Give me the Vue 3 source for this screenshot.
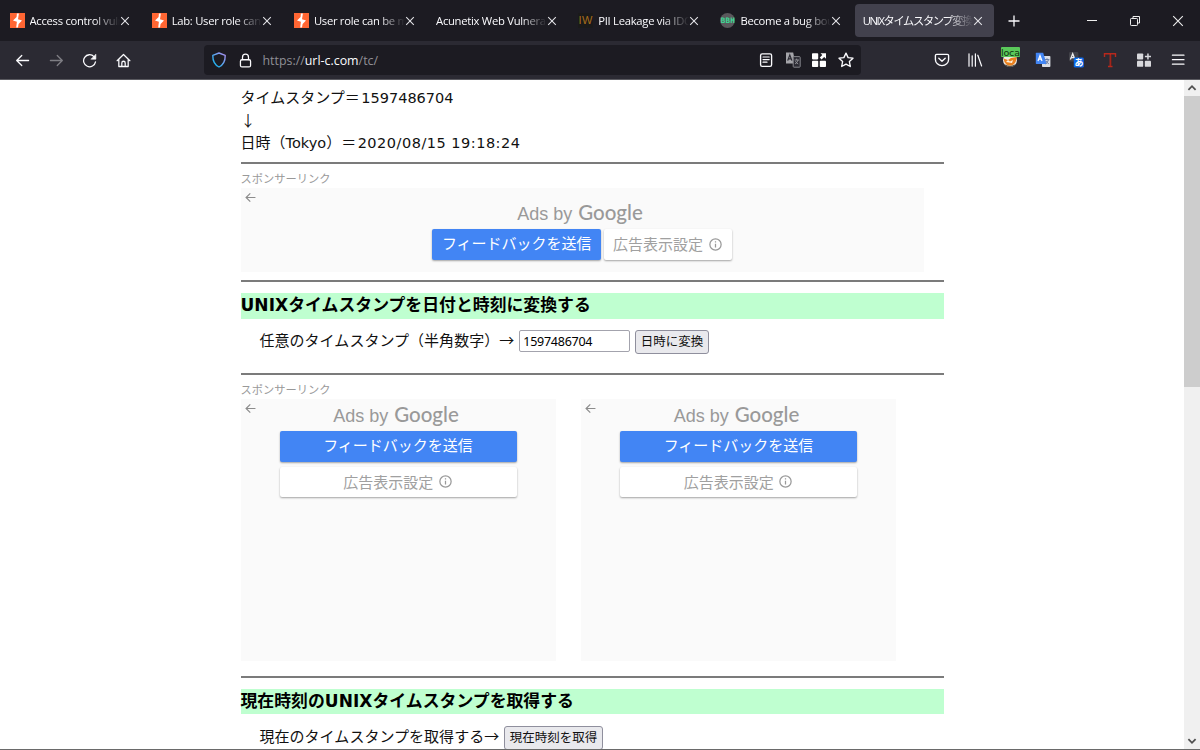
<script setup>
const tabs = [
  { title: 'Access control vulnerabilities', icon: 'burp' },
  { title: 'Lab: User role can be modified', icon: 'burp' },
  { title: 'User role can be modified in', icon: 'burp' },
  { title: 'Acunetix Web Vulnerability', icon: '' },
  { title: 'PII Leakage via IDOR', icon: 'iw' },
  { title: 'Become a bug bounty', icon: 'bbh' },
  { title: 'UNIXタイムスタンプ変換ツール', icon: '', active: true, jp: true }
]
</script>

<template>
  <div class="window">
    <header class="tabbar">
      <div v-for="(t, i) in tabs" :key="i" class="tab" :class="{ active: t.active }">
        <svg v-if="t.icon === 'burp'" class="fav" viewBox="0 0 15 15">
          <rect width="15" height="15" fill="#ff6633" />
          <path d="M8.9.6 6.9.6 6.6 4 3 7.6 6.9 8.7 6.2 14.4 8 14.4 8.6 11 12 7.4 8 6.2z" fill="#fff" />
        </svg>
        <span v-else-if="t.icon === 'iw'" class="fav iw">IW</span>
        <span v-else-if="t.icon === 'bbh'" class="fav bbh"><b>BBH</b></span>
        <span class="title" :class="{ jp: t.jp }">{{ t.title }}</span>
        <svg class="close" viewBox="0 0 10 10"><path d="M1.2 1.2 8.8 8.8M8.8 1.2 1.2 8.8" stroke="#e4e4e8" stroke-width="1.05" /></svg>
      </div>
      <svg class="plus" viewBox="0 0 12 12"><path d="M6 .5v11M.5 6h11" stroke="#fbfbfe" stroke-width="1.3" /></svg>
      <div class="winbtns">
        <svg viewBox="0 0 12 12"><path d="M1 5.5h10" stroke="#eee" stroke-width="1" /></svg>
        <svg viewBox="0 0 12 12" fill="none" stroke="#eee"><rect x="1.5" y="3.5" width="7" height="7" rx=".8" /><path d="M4 3.2V1.5h6.5V8H9" /></svg>
        <svg viewBox="0 0 12 12"><path d="M1.2 1.2 10.8 10.8M10.8 1.2 1.2 10.8" stroke="#eee" stroke-width="1.1" /></svg>
      </div>
    </header>

    <nav class="toolbar">
      <div class="navbtns">
        <svg viewBox="0 0 16 16" class="ic"><path d="M14.5 8H2M7.2 2.7 1.8 8l5.4 5.3" /></svg>
        <svg viewBox="0 0 16 16" class="ic dim"><path d="M1.5 8H14M8.8 2.7 14.2 8l-5.4 5.3" /></svg>
        <svg viewBox="0 0 16 16" class="ic"><path d="M14.4 9.4A6.4 6.4 0 1 1 12.8 3.9" /><path d="M14.8 1.6v5H9.8z" fill="#fbfbfe" stroke-width=".6" /></svg>
        <svg viewBox="0 0 16 16" class="ic"><path d="M1.2 8.2 8 1.6l6.8 6.6M3 7v7.4h10V7M6.2 14V10.6a1.8 1.8 0 0 1 3.6 0V14" /></svg>
      </div>
      <div class="urlbar">
        <svg viewBox="0 0 16 16" class="shield">
          <defs><linearGradient id="sg" x1="0" y1="1" x2="1" y2="0"><stop offset="0" stop-color="#00b8f0" /><stop offset=".5" stop-color="#5aa5ee" /><stop offset="1" stop-color="#b18cf0" /></linearGradient></defs>
          <path d="M8 1 14.2 3.4C14.3 8.8 12 12.9 8 15 4 12.9 1.7 8.8 1.8 3.4z" fill="none" stroke="url(#sg)" stroke-width="1.4" stroke-linejoin="round" />
        </svg>
        <svg viewBox="0 0 16 16" class="ic lock"><rect x="2.6" y="7.2" width="10.8" height="7.6" rx="1.6" /><path d="M4.8 7V4.4a3.2 3.2 0 0 1 6.4 0V7" /></svg>
        <span class="url">https://<b>url-c.com</b>/tc/</span>
        <div class="urlicons">
          <svg viewBox="0 0 16 16" class="ic"><rect x="2.6" y="1.8" width="11" height="12.6" rx="1.6" /><path d="M5 5h6.2M5 7.6h6.2M5 10.2h4" stroke-width="1.2" /></svg>
          <svg viewBox="0 0 16 16"><path d="M1 .5h7.2l2.2 11H1z" fill="#a5a5aa" /><rect x="8.2" y="4.6" width="7" height="10.6" rx=".8" fill="#2b2a33" stroke="#85858b" /><path d="M9.6 8h4.4M11.7 6.6V8M13 8q-.7 3-3 4M10.4 9.2q1 2 2.8 2.8" stroke="#a0a0a5" fill="none" stroke-width=".8" /><path d="M2.7 8.6 4.8 3l2.1 5.6M3.4 6.8h2.8" stroke="#2b2a33" fill="none" stroke-width="1.2" /></svg>
          <svg viewBox="0 0 16 16" fill="#fff"><rect x="1" y="1.2" width="6.2" height="6.2" rx=".8" /><rect x="1" y="8.8" width="6.2" height="6.2" rx=".8" /><rect x="8.8" y="8.8" width="6.2" height="6.2" rx=".8" /><path d="M9.5 1.2H15v5.5l-1.8-1.8-2.7 2.5-1.7-1.8 2.5-2.6z" /></svg>
          <svg viewBox="0 0 16 16" class="ic"><path d="m8 1.1 2.1 4.5 4.9.6-3.6 3.4.9 4.9L8 12.1l-4.3 2.4.9-4.9L1 6.2l4.9-.6z" /></svg>
        </div>
      </div>
      <div class="exts">
        <svg viewBox="0 0 16 16" class="ic"><path d="M2.6 2.3h10.8q1.2 0 1.2 1.2v3.9a6.6 6.2 0 0 1-13.2 0V3.5q0-1.2 1.2-1.2zM4.8 6.2 8 9.2l3.2-3" /></svg>
        <svg viewBox="0 0 16 16" class="ic"><path d="M2 1.8v12.4M5.2 3.8v10.4M8.4 1.8v12.4M10.8 3.2 14.6 14" stroke-width="1.2" /></svg>
        <div class="fox">
          <svg viewBox="0 0 16 16"><circle cx="8" cy="8" r="7" fill="#f1ece4" /><path d="M1.6 6.5 6 8l3-2 5.5-1q.3 5-3 7.4Q8 15 4.4 12.4 1.8 10 1.6 6.5z" fill="#e9801f" /><path d="m4 10 2-2 2 1.4L11 8l-1 3z" fill="#fff2df" /><path d="M3 13q5 3.2 10 0" stroke="#575047" fill="none" stroke-width="1.2" /></svg>
          <span>loca</span>
        </div>
        <svg viewBox="0 0 16 16"><rect x="7" y="4" width="8.4" height="11" rx=".8" fill="#dcdfe6" /><path d="M1.4.8h6.8L11.6 12H1.4Q.8 12 .8 11.3V1.5Q.8.8 1.4.8z" fill="#4285f4" /><path d="M9.8 7.6h4.6M12 6.3v1.3M13.4 8q-.7 2.6-2.8 4M11 9q1 2 2.8 2.8" fill="none" stroke="#5b7199" stroke-width=".9" /><path d="M3 9 5 3.6 7 9M3.7 7.2h2.6" stroke="#fff" fill="none" stroke-width="1.2" /></svg>
        <svg viewBox="0 0 16 16"><rect x="1" y="0" width="9.4" height="9.4" rx="1.4" fill="#424249" /><path d="M2.4 7.4 4.7 1.8 7 7.4M3.2 5.6h3" stroke="#eee" fill="none" stroke-width="1.3" /><rect x="5.8" y="5.6" width="10" height="10" rx="1.4" fill="#0a66e8" /><text x="6.4" y="13.9" class="mini">あ</text></svg>
        <svg viewBox="0 0 16 16"><path d="M2.5 5V1.8h11V5M8.3 1.8v12.4M6 14.5h4.5" stroke="#b8281c" stroke-width="1.4" fill="none" /><path d="M9.2 3v11" stroke="#701f19" stroke-width=".9" /></svg>
        <svg viewBox="0 0 16 16" fill="#d8d8dc"><rect x="1" y="1.4" width="6.2" height="6" rx=".9" /><rect x="1" y="8.8" width="6.2" height="6" rx=".9" /><rect x="8.8" y="8.8" width="6.2" height="6" rx=".9" /><path d="M11.2 1.4h1.5v2.3H15v1.5h-2.3v2.3h-1.5V5.2H8.9V3.7h2.3z" /></svg>
        <svg viewBox="0 0 16 16" class="ic"><path d="M2.4 3.2h11.6M2.4 7.7h11.6M2.4 12.2h11.6" stroke-width="1.2" /></svg>
      </div>
    </nav>

    <div class="viewport">
      <main>
        <div class="result">
          <p>タイムスタンプ＝<span class="lat num">1597486704</span></p>
          <p>↓</p>
          <p>日時（<span class="lat">Tokyo</span>）＝<span class="lat num date">2020/08/15 19:18:24</span></p>
        </div>
        <hr />
        <p class="sponsor">スポンサーリンク</p>
        <section class="ad wide">
          <svg class="back" viewBox="0 0 10 10"><path d="M9.5 5H1M4.8 1.2 1 5l3.8 3.8" /></svg>
          <div class="brand"><span>Ads by</span><b>Google</b></div>
          <div class="btns">
            <div class="send">フィードバックを送信</div>
            <div class="why">広告表示設定<svg viewBox="0 0 12 12"><circle cx="6" cy="6" r="5.2" /><path d="M6 5.2v3.6M6 3v1.2" /></svg></div>
          </div>
        </section>
        <hr class="h2" />
        <h2><span class="lat">UNIX</span>タイムスタンプを日付と時刻に変換する</h2>
        <div class="row">
          <span>任意のタイムスタンプ（半角数字）→</span>
          <input type="text" value="1597486704" />
          <button>日時に変換</button>
        </div>
        <hr />
        <p class="sponsor">スポンサーリンク</p>
        <div class="pair">
          <section v-for="n in 2" :key="n" class="ad box">
            <svg class="back" viewBox="0 0 10 10"><path d="M9.5 5H1M4.8 1.2 1 5l3.8 3.8" /></svg>
            <div class="brand"><span>Ads by</span><b>Google</b></div>
            <div class="btns">
              <div class="send">フィードバックを送信</div>
              <div class="why">広告表示設定<svg viewBox="0 0 12 12"><circle cx="6" cy="6" r="5.2" /><path d="M6 5.2v3.6M6 3v1.2" /></svg></div>
            </div>
          </section>
        </div>
        <hr class="h4" />
        <h2>現在時刻の<span class="lat">UNIX</span>タイムスタンプを取得する</h2>
        <div class="row">
          <span>現在のタイムスタンプを取得する→</span>
          <button>現在時刻を取得</button>
        </div>
      </main>
      <aside class="scroll">
        <svg viewBox="0 0 16 16"><path d="M4.4 9.8 8 6.2l3.6 3.6" /></svg>
        <div class="thumb"></div>
        <svg class="down" viewBox="0 0 16 16"><path d="M4.4 6.2 8 9.8l3.6-3.6" /></svg>
      </aside>
    </div>
  </div>
</template>

<style>
html, body { margin: 0; overflow: hidden; }
</style>

<style scoped>
* { box-sizing: border-box; }
.window { width: 1200px; height: 750px; overflow: hidden; display: flex; flex-direction: column; background: #fff; border-bottom: 1px solid #6a6a6a; font-family: "Noto Sans CJK JP", sans-serif; }
p, h2 { margin: 0; white-space: nowrap; }
svg { display: block; flex: none; }

.tabbar { height: 41px; flex: none; background: #1c1b22; display: flex; align-items: center; padding-left: 2px; }
.tab { width: 139.2px; margin-right: 3px; height: 33px; flex: none; display: flex; align-items: center; padding: 0 11px 0 7.5px; border-radius: 4px; color: #fbfbfe; }
.tab.active { background: #42414d; }
.fav { width: 15px; height: 15px; margin-right: 5px; flex: none; }
.iw { font: 11px/15px "Liberation Sans", sans-serif; color: #a86d1a; background: #1a1a1a; text-align: center; letter-spacing: .6px; }
.bbh { border-radius: 50%; background: #5a585c; color: #3ddc97; display: flex; justify-content: center; align-items: center; }
.bbh b { font: bold 7.5px/8px "DejaVu Sans Mono", monospace; letter-spacing: .3px; }
.title { flex: 1; min-width: 0; overflow: hidden; white-space: nowrap; font: 11.25px/18px "Open Sans", "Noto Sans", sans-serif; letter-spacing: -.28px; -webkit-mask-image: linear-gradient(to left, transparent 0, #000 26px); mask-image: linear-gradient(to left, transparent 0, #000 26px); }
.title.jp { font-family: "Open Sans", "Noto Sans CJK JP", sans-serif; letter-spacing: -1.35px; }
.close { width: 10px; height: 10px; }
.plus { width: 12px; height: 12px; margin-left: 11px; }
.winbtns { margin-left: auto; display: flex; gap: 31px; padding-right: 16px; }
.winbtns svg { width: 12px; height: 12px; }

.toolbar { height: 39px; flex: none; background: #2b2a33; border-bottom: 1px solid #5a5a60; display: flex; align-items: center; }
.ic { fill: none; stroke: #fbfbfe; stroke-width: 1.35; stroke-linecap: round; stroke-linejoin: round; }
.dim { opacity: .4; }
.navbtns { display: flex; gap: 18.6px; padding-left: 15px; width: 204px; flex: none; }
.navbtns svg { width: 15px; height: 15px; }
.urlbar { width: 657px; height: 30px; flex: none; background: #1c1b22; border-radius: 4px; display: flex; align-items: center; padding: 0 7.5px 0 7px; }
.shield { width: 16px; height: 16px; }
.lock { width: 15px; height: 15px; margin-left: 11px; }
.url { margin-left: 9.5px; padding-top: 2px; font: 12.4px/20px "Open Sans", sans-serif; color: #8f8f96; }
.url b { font-weight: 400; color: #fbfbfe; }
.urlicons { margin-left: auto; display: flex; gap: 10.4px; }
.urlicons svg { width: 16px; height: 16px; }
.exts { margin-left: auto; padding-right: 14.5px; display: flex; align-items: center; gap: 17.7px; }
.exts > svg, .fox, .fox svg { width: 16px; height: 16px; }
.fox { position: relative; }
.fox span { position: absolute; left: 0; top: -5px; width: 19px; height: 10px; background: #5ac85a; color: #10300f; font: 9.5px/11px "DejaVu Sans", sans-serif; letter-spacing: -.2px; overflow: hidden; border-radius: 1px; white-space: nowrap; }
.fox svg { margin-left: 1px; }
.mini { font: bold 9px "Noto Sans CJK JP", sans-serif; fill: #fff; }

.viewport { flex: 1; min-height: 0; display: flex; justify-content: space-between; }
main { margin-left: 240.5px; width: 703px; color: #111; font-size: 15px; line-height: 22.5px; }
.result { padding-top: 6px; height: 82px; }
.lat { font-family: "DejaVu Sans", sans-serif; font-size: 14.5px; line-height: 1; }
.num { margin-left: 1.5px; }
.date { letter-spacing: .5px; }
hr { margin: 0; border: 0; height: 2px; background: #7b7b7b; }
.sponsor { font-size: 11.25px; line-height: 17px; color: #999; height: 24px; padding-top: 6px; }
.ad { background: #fafafa; position: relative; }
.wide { width: 683px; height: 84px; padding-top: 13px; }
.back { position: absolute; left: 4px; top: 4px; width: 11px; height: 11px; fill: none; stroke: #8c8c8c; stroke-width: 1.1; }
.brand { display: flex; justify-content: center; align-items: baseline; gap: 6px; color: #999; height: 23px; line-height: 22px; padding-right: 4px; }
.brand span { font-family: "Liberation Sans", sans-serif; font-size: 18px; }
.brand b { font: 500 20.5px/22px Lato, sans-serif; }
.btns { display: flex; justify-content: center; gap: 2.5px; padding-top: 5px; }
.wide .send { width: 169px; }
.wide .why { width: 128px; }
.send, .why { height: 30.5px; line-height: 28.5px; border-radius: 2px; box-shadow: 0 1px 2px rgba(0,0,0,.35); white-space: nowrap; }
.send { background: #4285f4; color: #fff; text-align: center; }
.why { background: #fff; color: #a0a0a0; display: flex; justify-content: center; align-items: center; gap: 5.5px; padding-right: 1px; }
.why svg { width: 13px; height: 13px; fill: none; stroke: #999; stroke-width: 1.15; }
.h2 { margin-top: 8px; }
h2 { background: #bfffd0; height: 25.5px; line-height: 22.5px; font-size: 16.875px; font-weight: 700; color: #000; margin-top: 11px; }
h2 .lat { font-size: 17px; letter-spacing: .05px; }
.row { display: flex; align-items: flex-start; padding-left: 19px; height: 54.5px; padding-top: 11.5px; }
.row > span { line-height: 20px; white-space: nowrap; letter-spacing: .03px; }
input { width: 111px; height: 22px; margin: 0 0 0 5px; padding: 0 3px; border: 1px solid #a3a3ad; border-radius: 2px; font: 12.5px "Noto Sans", sans-serif; letter-spacing: -.25px; color: #000; background: #fff; }
button { margin: 0 0 0 5px; height: 24px; padding: 0 4.5px 2px; border: 1px solid #8f8f9d; border-radius: 3px; background: #e9e9ed; color: #111; font: 12.5px/20px "Noto Sans CJK JP", sans-serif; white-space: nowrap; }
.pair { display: flex; gap: 25.5px; }
.box { width: 315px; height: 262px; padding-top: 4px; }
.box .btns { flex-direction: column; align-items: center; gap: 5px; }
.box .send, .box .why { width: 237px; }
.h4 { margin-top: 14.5px; }
.scroll { width: 16px; background: #f0f0f0; display: flex; flex-direction: column; }
.scroll svg { width: 16px; height: 16px; fill: none; stroke: #505050; stroke-width: 1.8; }
.thumb { height: 291px; background: #cdcdcd; }
.down { margin-top: auto; }
</style>
